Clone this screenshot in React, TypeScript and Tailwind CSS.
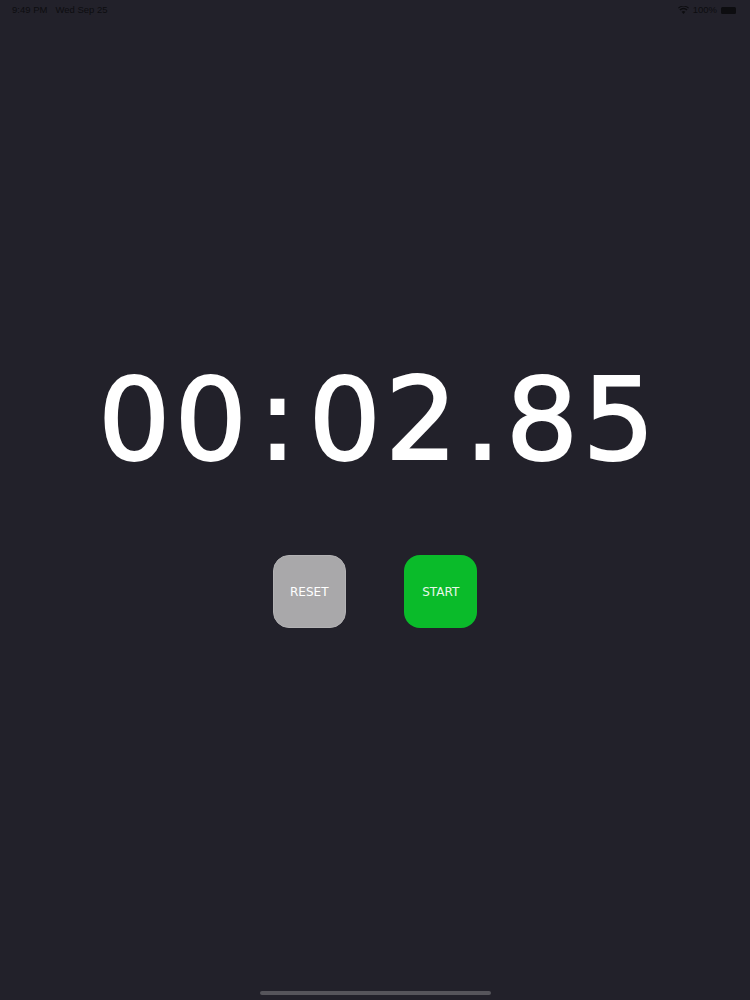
function StatusBar() {
  return (
    <div className="h-5 flex items-center justify-between pl-3 pr-[14px] text-[9.5px] leading-none text-[#0d0d10] font-['Liberation_Sans',sans-serif]">
      <div className="flex gap-2">
        <span>9:49 PM</span>
        <span>Wed Sep 25</span>
      </div>
      <div className="flex items-center gap-1">
        <svg width="11" height="8" viewBox="0 0 11 8" fill="#0d0d10">
          <path d="M5.5 8 3.6 5.8a2.8 2.8 0 0 1 3.8 0L5.5 8ZM2.5 4.6 1.4 3.4a6 6 0 0 1 8.2 0L8.5 4.6a4.4 4.4 0 0 0-6 0ZM.7 2.5 0 1.8a8 8 0 0 1 11 0l-.7.7a7 7 0 0 0-9.6 0Z" />
        </svg>
        <span>100%</span>
        <div className="w-[15px] h-[7px] rounded-[1.5px] bg-[#0d0d10]" />
      </div>
    </div>
  );
}

export default function App() {
  return (
    <div className="h-[1000px] w-[750px] bg-[#22212a] flex flex-col font-['DejaVu_Sans',sans-serif]">
      <StatusBar />
      <main className="flex-1 flex flex-col items-center pt-[325px]">
        <p className="text-[114px] leading-[150px] tracking-[4px] pl-[7px] text-white whitespace-nowrap [-webkit-text-stroke:2px_white]">
          00<span className="ml-[7px] mr-[8px]">:</span>02<span className="ml-[3px] mr-[1px]">.</span>85
        </p>
        <div className="flex gap-[58.5px] mt-[60px]">
          <button className="w-[73px] h-[73px] rounded-[16px] bg-[#a9a8aa] border border-[#b3b2b4] text-white text-[12px]">
            RESET
          </button>
          <button className="w-[73px] h-[73px] rounded-[16px] bg-[#0abb2a] text-[#e8f8ea] text-[12px]">
            START
          </button>
        </div>
      </main>
      <div className="flex justify-center pb-[5px]">
        <div className="w-[231px] h-[4px] rounded-full bg-[#56555b]" />
      </div>
    </div>
  );
}
